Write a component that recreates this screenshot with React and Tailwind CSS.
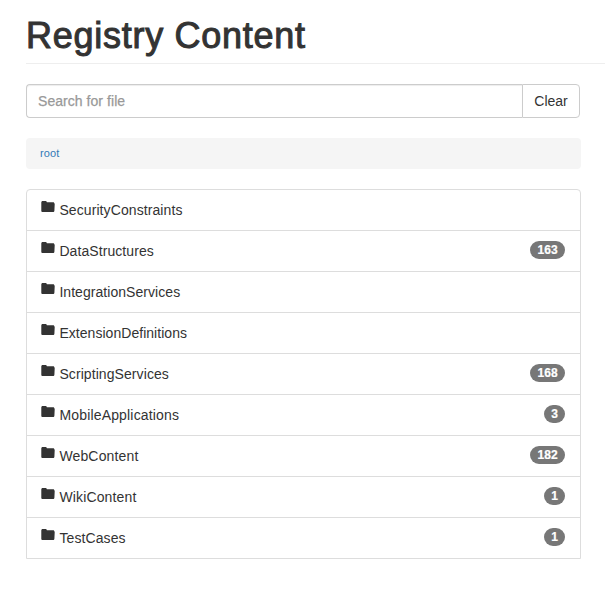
const items = [
  { name: 'SecurityConstraints', spacing: 'tracking-[0.09px]' },
  { name: 'DataStructures', count: 163, spacing: 'tracking-[0.08px]' },
  { name: 'IntegrationServices', spacing: 'tracking-[0.05px]' },
  { name: 'ExtensionDefinitions', spacing: 'tracking-[0.04px]' },
  { name: 'ScriptingServices', count: 168, spacing: 'tracking-[0.08px]' },
  { name: 'MobileApplications', count: 3, spacing: 'tracking-[0.17px]' },
  { name: 'WebContent', count: 182, spacing: 'tracking-[0.15px]' },
  { name: 'WikiContent', count: 1, spacing: 'tracking-[0.15px]' },
  { name: 'TestCases', count: 1, spacing: 'tracking-[0.1px]' },
];

function FolderIcon() {
  return (
    <svg className="-mt-[8px] h-[11px] w-[14px] shrink-0" viewBox="0 0 14 11" fill="#333">
      <path d="M.3 9.7V1.5C.3.6.8 0 1.6 0H4.3C5.2 0 5.7.5 5.9 1.2H12.1C12.9 1.2 13.3 1.7 13.3 2.3C13.7 2.5 13.8 2.8 13.7 3.2L13.4 9.7C13.3 10.6 12.9 11 12.1 11H1.6C.8 11 .3 10.5.3 9.7Z" />
    </svg>
  );
}

export default function App() {
  return (
    <main className="min-h-[594px] bg-white pt-[16px] pl-[26px] font-['Liberation_Sans',Arial,sans-serif] text-[14px] leading-5 text-[#333]">
      <header className="h-[48px] border-b border-[#eee]">
        <h1 className="text-[36px] leading-[40px] tracking-[0.73px] whitespace-nowrap [-webkit-text-stroke:1px_#333]">
          Registry Content
        </h1>
      </header>

      <div className="mt-[20px] flex h-[34px] w-[554px]">
        <input
          type="text"
          placeholder="Search for file"
          className="min-w-0 flex-1 rounded-l-[4px] border border-r-0 border-[#ccc] px-[11px] text-[14px] tracking-[0.05px] shadow-[inset_0_1px_1px_rgba(0,0,0,0.075)] outline-none placeholder:text-[#999] placeholder:[-webkit-text-stroke:0.25px_#999]"
        />
        <button className="w-[58px] rounded-r-[4px] border border-[#ccc] bg-white text-[14px]">Clear</button>
      </div>

      <nav className="mt-[20px] flex h-[31px] w-[555px] items-center rounded-[4px] bg-[#f5f5f5] pb-[2px] pl-[14px] text-[11px]">
        <a className="tracking-[0.15px] text-[#337ab7]">root</a>
      </nav>

      <ul className="mt-[20px] w-[555px] overflow-hidden rounded-t-[4px] border border-[#ddd]">
        {items.map((item) => (
          <li key={item.name} className="flex h-[41px] items-center border-b border-[#ddd] pr-[15px] pl-[14px] last:h-[40px] last:border-b-0">
            <FolderIcon />
            <span className={`ml-[4.4px] whitespace-nowrap ${item.spacing}`}>{item.name}</span>
            {item.count && (
              <span className="mb-[2px] ml-auto flex h-[18px] items-center justify-center rounded-[10px] bg-[#777] px-[7px] text-[12px] leading-3 font-bold tracking-[0.2px] text-white [-webkit-text-stroke:0.2px_white]">
                {item.count}
              </span>
            )}
          </li>
        ))}
      </ul>
    </main>
  );
}
